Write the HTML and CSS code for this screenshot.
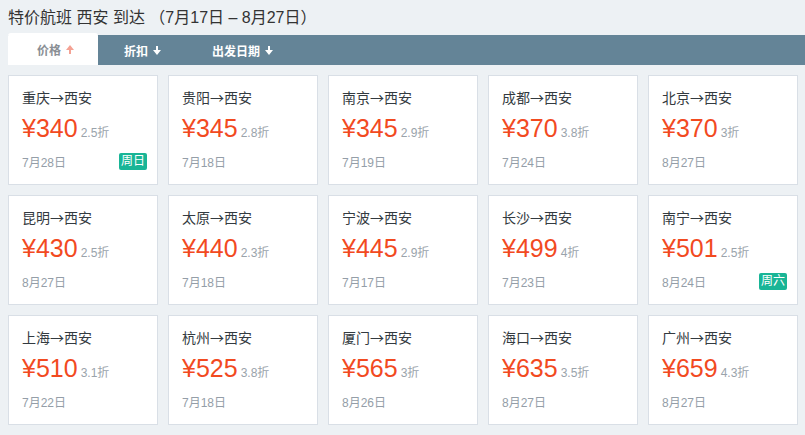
FILE: index.html
```html
<!DOCTYPE html>
<html lang="zh-CN">
<head>
<meta charset="utf-8" />
<title>特价航班 西安 到达</title>
<link rel="stylesheet" href="styles.css">
</head>
<body>

<div class="page">
  <h1 class="title">特价航班 西安 到达 （7月17日 – 8月27日）</h1>

  <div class="tabs">
    <div class="tab active">价格 <svg class="arrow up" width="8" height="9" viewBox="0 0 8 9"><path d="M3 9V5H0l4-5 4 5H5v4z"/></svg></div>
    <div class="tab">折扣 <svg class="arrow" width="8" height="9" viewBox="0 0 8 9"><path d="M3 0v4H0l4 5 4-5H5V0z"/></svg></div>
    <div class="tab">出发日期 <svg class="arrow" width="8" height="9" viewBox="0 0 8 9"><path d="M3 0v4H0l4 5 4-5H5V0z"/></svg></div>
  </div>

  <div class="grid">
    <div class="card">
      <div class="route">重庆→西安</div>
      <div class="price"><span class="num">¥340</span><span class="off">2.5折</span></div>
      <div class="foot"><span class="date">7月28日</span><span class="badge">周日</span></div>
    </div>
    <div class="card">
      <div class="route">贵阳→西安</div>
      <div class="price"><span class="num">¥345</span><span class="off">2.8折</span></div>
      <div class="foot"><span class="date">7月18日</span></div>
    </div>
    <div class="card">
      <div class="route">南京→西安</div>
      <div class="price"><span class="num">¥345</span><span class="off">2.9折</span></div>
      <div class="foot"><span class="date">7月19日</span></div>
    </div>
    <div class="card">
      <div class="route">成都→西安</div>
      <div class="price"><span class="num">¥370</span><span class="off">3.8折</span></div>
      <div class="foot"><span class="date">7月24日</span></div>
    </div>
    <div class="card">
      <div class="route">北京→西安</div>
      <div class="price"><span class="num">¥370</span><span class="off">3折</span></div>
      <div class="foot"><span class="date">8月27日</span></div>
    </div>

    <div class="card">
      <div class="route">昆明→西安</div>
      <div class="price"><span class="num">¥430</span><span class="off">2.5折</span></div>
      <div class="foot"><span class="date">8月27日</span></div>
    </div>
    <div class="card">
      <div class="route">太原→西安</div>
      <div class="price"><span class="num">¥440</span><span class="off">2.3折</span></div>
      <div class="foot"><span class="date">7月18日</span></div>
    </div>
    <div class="card">
      <div class="route">宁波→西安</div>
      <div class="price"><span class="num">¥445</span><span class="off">2.9折</span></div>
      <div class="foot"><span class="date">7月17日</span></div>
    </div>
    <div class="card">
      <div class="route">长沙→西安</div>
      <div class="price"><span class="num">¥499</span><span class="off">4折</span></div>
      <div class="foot"><span class="date">7月23日</span></div>
    </div>
    <div class="card">
      <div class="route">南宁→西安</div>
      <div class="price"><span class="num">¥501</span><span class="off">2.5折</span></div>
      <div class="foot"><span class="date">8月24日</span><span class="badge">周六</span></div>
    </div>

    <div class="card">
      <div class="route">上海→西安</div>
      <div class="price"><span class="num">¥510</span><span class="off">3.1折</span></div>
      <div class="foot"><span class="date">7月22日</span></div>
    </div>
    <div class="card">
      <div class="route">杭州→西安</div>
      <div class="price"><span class="num">¥525</span><span class="off">3.8折</span></div>
      <div class="foot"><span class="date">7月18日</span></div>
    </div>
    <div class="card">
      <div class="route">厦门→西安</div>
      <div class="price"><span class="num">¥565</span><span class="off">3折</span></div>
      <div class="foot"><span class="date">8月26日</span></div>
    </div>
    <div class="card">
      <div class="route">海口→西安</div>
      <div class="price"><span class="num">¥635</span><span class="off">3.5折</span></div>
      <div class="foot"><span class="date">8月27日</span></div>
    </div>
    <div class="card">
      <div class="route">广州→西安</div>
      <div class="price"><span class="num">¥659</span><span class="off">4.3折</span></div>
      <div class="foot"><span class="date">8月27日</span></div>
    </div>
  </div>
</div>

</body>
</html>
```

FILE: styles.css
```css
html, body { margin: 0; padding: 0; }

body {
  background-color: #edf1f4;
  color: #333;
  font-family: "Liberation Sans", "Noto Sans CJK SC", sans-serif;
}

.page { padding-left: 8px; }

.title {
  margin: 0;
  padding-top: 7px;
  height: 26px;
  font-size: 16px;
  font-weight: normal;
  line-height: 22px;
  color: #333;
}

.tabs {
  display: flex;
  height: 30px;
  margin-top: 2px;
  background-color: #648497;
}

.tab {
  display: flex;
  align-items: center;
  gap: 5px;
  padding: 0 25px 0 26px;
  font-size: 12px;
  font-weight: bold;
  color: #fff;
}

.tab.active {
  margin-top: -2px;
  padding-left: 29px;
  padding-right: 24px;
  background-color: #fff;
  color: #8a8f95;
  border-radius: 3px 3px 0 0;
}

.arrow { fill: #fff; margin-top: 1px; }
.arrow.up { fill: #f4a294; }

.grid {
  display: grid;
  grid-template-columns: repeat(5, 150px);
  gap: 10px;
  padding: 10px 0 0 0;
}

.card {
  height: 110px;
  box-sizing: border-box;
  padding: 11px 10px 0 13px;
  background-color: #fff;
  border: 1px solid #d9dfe6;
}

.route {
  font-family: "Noto Sans CJK SC", sans-serif;
  font-size: 14px;
  line-height: 20px;
  color: #333a40;
}

.price {
  margin-top: 5px;
  height: 32px;
  line-height: 32px;
  white-space: nowrap;
}

.num {
  font-size: 25px;
  color: #f24a1f;
}

.off {
  margin-left: 3px;
  font-size: 12px;
  color: #9aa3ab;
}

.foot {
  display: flex;
  justify-content: space-between;
  align-items: center;
  margin-top: 9px;
  height: 17px;
}

.date {
  font-size: 12px;
  color: #949ea8;
}

.badge {
  padding: 0 2px;
  height: 17px;
  line-height: 17px;
  font-size: 12px;
  color: #fff;
  background-color: #19b596;
  border-radius: 2px;
}
```
